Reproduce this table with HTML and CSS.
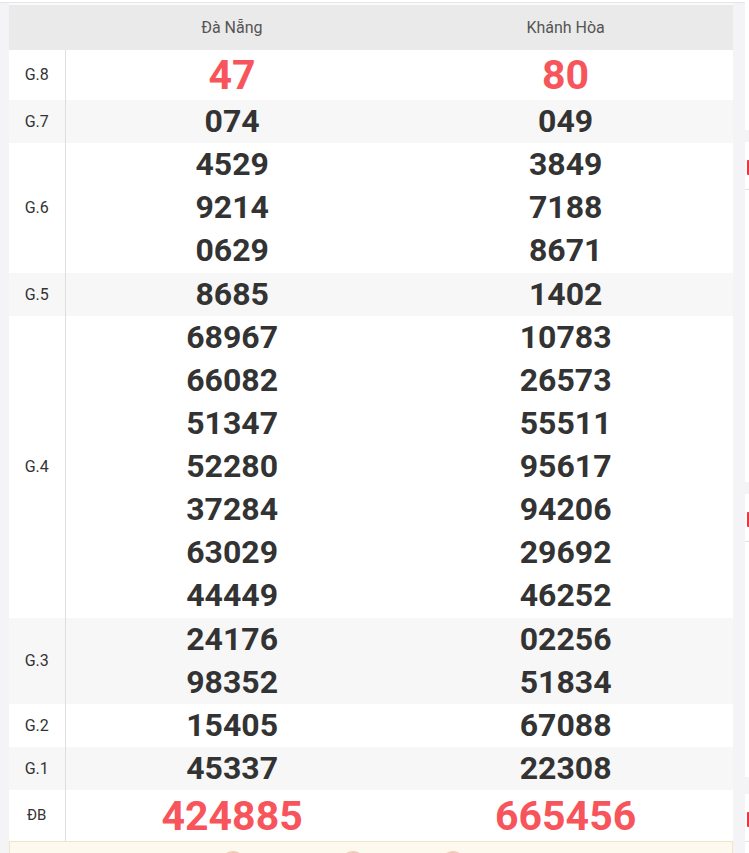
FILE: index.html
```html
<!DOCTYPE html>
<html lang="vi">
<head>
<meta charset="utf-8">
<title>Kết quả xổ số</title>
<link rel="stylesheet" href="styles.css">
</head>
<body>
<div class="topline"></div>
<div class="page">
  <div class="gutter"></div>
  <main class="main">
    <table class="kq">
      <thead>
        <tr>
          <th class="lbl"></th>
          <th>Đà Nẵng</th>
          <th>Khánh Hòa</th>
        </tr>
      </thead>
      <tbody>
        <tr class="big">
          <td class="lbl">G.8</td>
          <td class="red">47</td>
          <td class="red">80</td>
        </tr>
        <tr class="alt">
          <td class="lbl">G.7</td>
          <td><div>074</div></td>
          <td><div>049</div></td>
        </tr>
        <tr>
          <td class="lbl">G.6</td>
          <td><div>4529</div><div>9214</div><div>0629</div></td>
          <td><div>3849</div><div>7188</div><div>8671</div></td>
        </tr>
        <tr class="alt">
          <td class="lbl">G.5</td>
          <td><div>8685</div></td>
          <td><div>1402</div></td>
        </tr>
        <tr>
          <td class="lbl">G.4</td>
          <td><div>68967</div><div>66082</div><div>51347</div><div>52280</div><div>37284</div><div>63029</div><div>44449</div></td>
          <td><div>10783</div><div>26573</div><div>55511</div><div>95617</div><div>94206</div><div>29692</div><div>46252</div></td>
        </tr>
        <tr class="alt">
          <td class="lbl">G.3</td>
          <td><div>24176</div><div>98352</div></td>
          <td><div>02256</div><div>51834</div></td>
        </tr>
        <tr>
          <td class="lbl">G.2</td>
          <td><div>15405</div></td>
          <td><div>67088</div></td>
        </tr>
        <tr class="alt">
          <td class="lbl">G.1</td>
          <td><div>45337</div></td>
          <td><div>22308</div></td>
        </tr>
        <tr class="big db">
          <td class="lbl">ĐB</td>
          <td class="red">424885</td>
          <td class="red">665456</td>
        </tr>
      </tbody>
    </table>
    <div class="cream">
      <span class="dot d1"></span>
      <span class="dot d2"></span>
      <span class="dot d3"></span>
    </div>
  </main>
  <aside class="side">
    <section class="box b1"></section>
    <section class="box b2"><div class="box-title"><span class="bar"></span></div></section>
    <section class="box b3"><div class="box-title"><span class="bar"></span></div></section>
    <section class="box b4"><div class="box-title"><span class="bar"></span></div></section>
  </aside>
</div>
</body>
</html>
```

FILE: styles.css
```css
html, body {
  margin: 0;
  padding: 0;
  overflow: hidden;
  background: #f4f4f7;
  font-family: Roboto, "Liberation Sans", Arial, sans-serif;
}

.topline {
  height: 2px;
  background: #ffffff;
  border-bottom: 1px solid #e6e6e8;
}

.page {
  display: flex;
  align-items: flex-start;
}

.gutter {
  width: 9px;
  flex: none;
}

.main {
  width: 724px;
  flex: none;
  padding-top: 2px;
  background: linear-gradient(#fbfafa, #fbfafa) top / 100% 2px no-repeat;
}

.kq {
  width: 724px;
  border-collapse: collapse;
  table-layout: fixed;
  background: #ffffff;
}

.kq th {
  height: 45px;
  padding: 0;
  background: #ebeaea;
  color: #555555;
  font-weight: 400;
  font-size: 16px;
  text-align: center;
  vertical-align: middle;
}

.kq th.lbl {
  width: 56px;
}

.kq td {
  padding: 0;
  text-align: center;
  vertical-align: middle;
  color: #333333;
  font-weight: 700;
  font-size: 32px;
  line-height: 43.125px;
}

.kq td.lbl {
  width: 56px;
  border-right: 1px solid #dedede;
  font-weight: 400;
  font-size: 16px;
  color: #333333;
}

.kq tr.alt td {
  background: #f7f7f7;
}

.kq tr.big td.red {
  color: #f7545b;
  font-size: 41px;
  height: 50px;
  line-height: 50px;
}

.kq tr.db td {
  height: 51px;
}

.kq tr.db td.lbl {
  font-size: 15px;
}

.cream {
  height: 40px;
  background: #fdf9ef;
  border: 1px solid #f3e4c8;
  box-sizing: border-box;
  display: flex;
  padding-top: 9px;
  padding-left: 211px;
}

.dot {
  width: 24px;
  height: 24px;
  border-radius: 50%;
  background: #f2cdb5;
  flex: none;
}

.d2 { margin-left: 96px; }
.d3 { margin-left: 76px; }

.side {
  margin-left: 12px;
  width: 300px;
  flex: none;
  display: flex;
  flex-direction: column;
  gap: 12px;
}

.box {
  background: #ffffff;
}

.b1 { height: 130px; margin-top: -3px; }
.b2 { height: 340px; }
.b3 { height: 283px; }
.b4 { height: 300px; margin-top: 5px; }

.box-title {
  margin-top: 18px;
  height: 29px;
  border-bottom: 1px solid #e2e2e2;
  display: flex;
  align-items: flex-start;
}

.bar {
  width: 4px;
  height: 15px;
  background: #e9363f;
  border-radius: 1px;
  margin-left: 2px;
}
```
